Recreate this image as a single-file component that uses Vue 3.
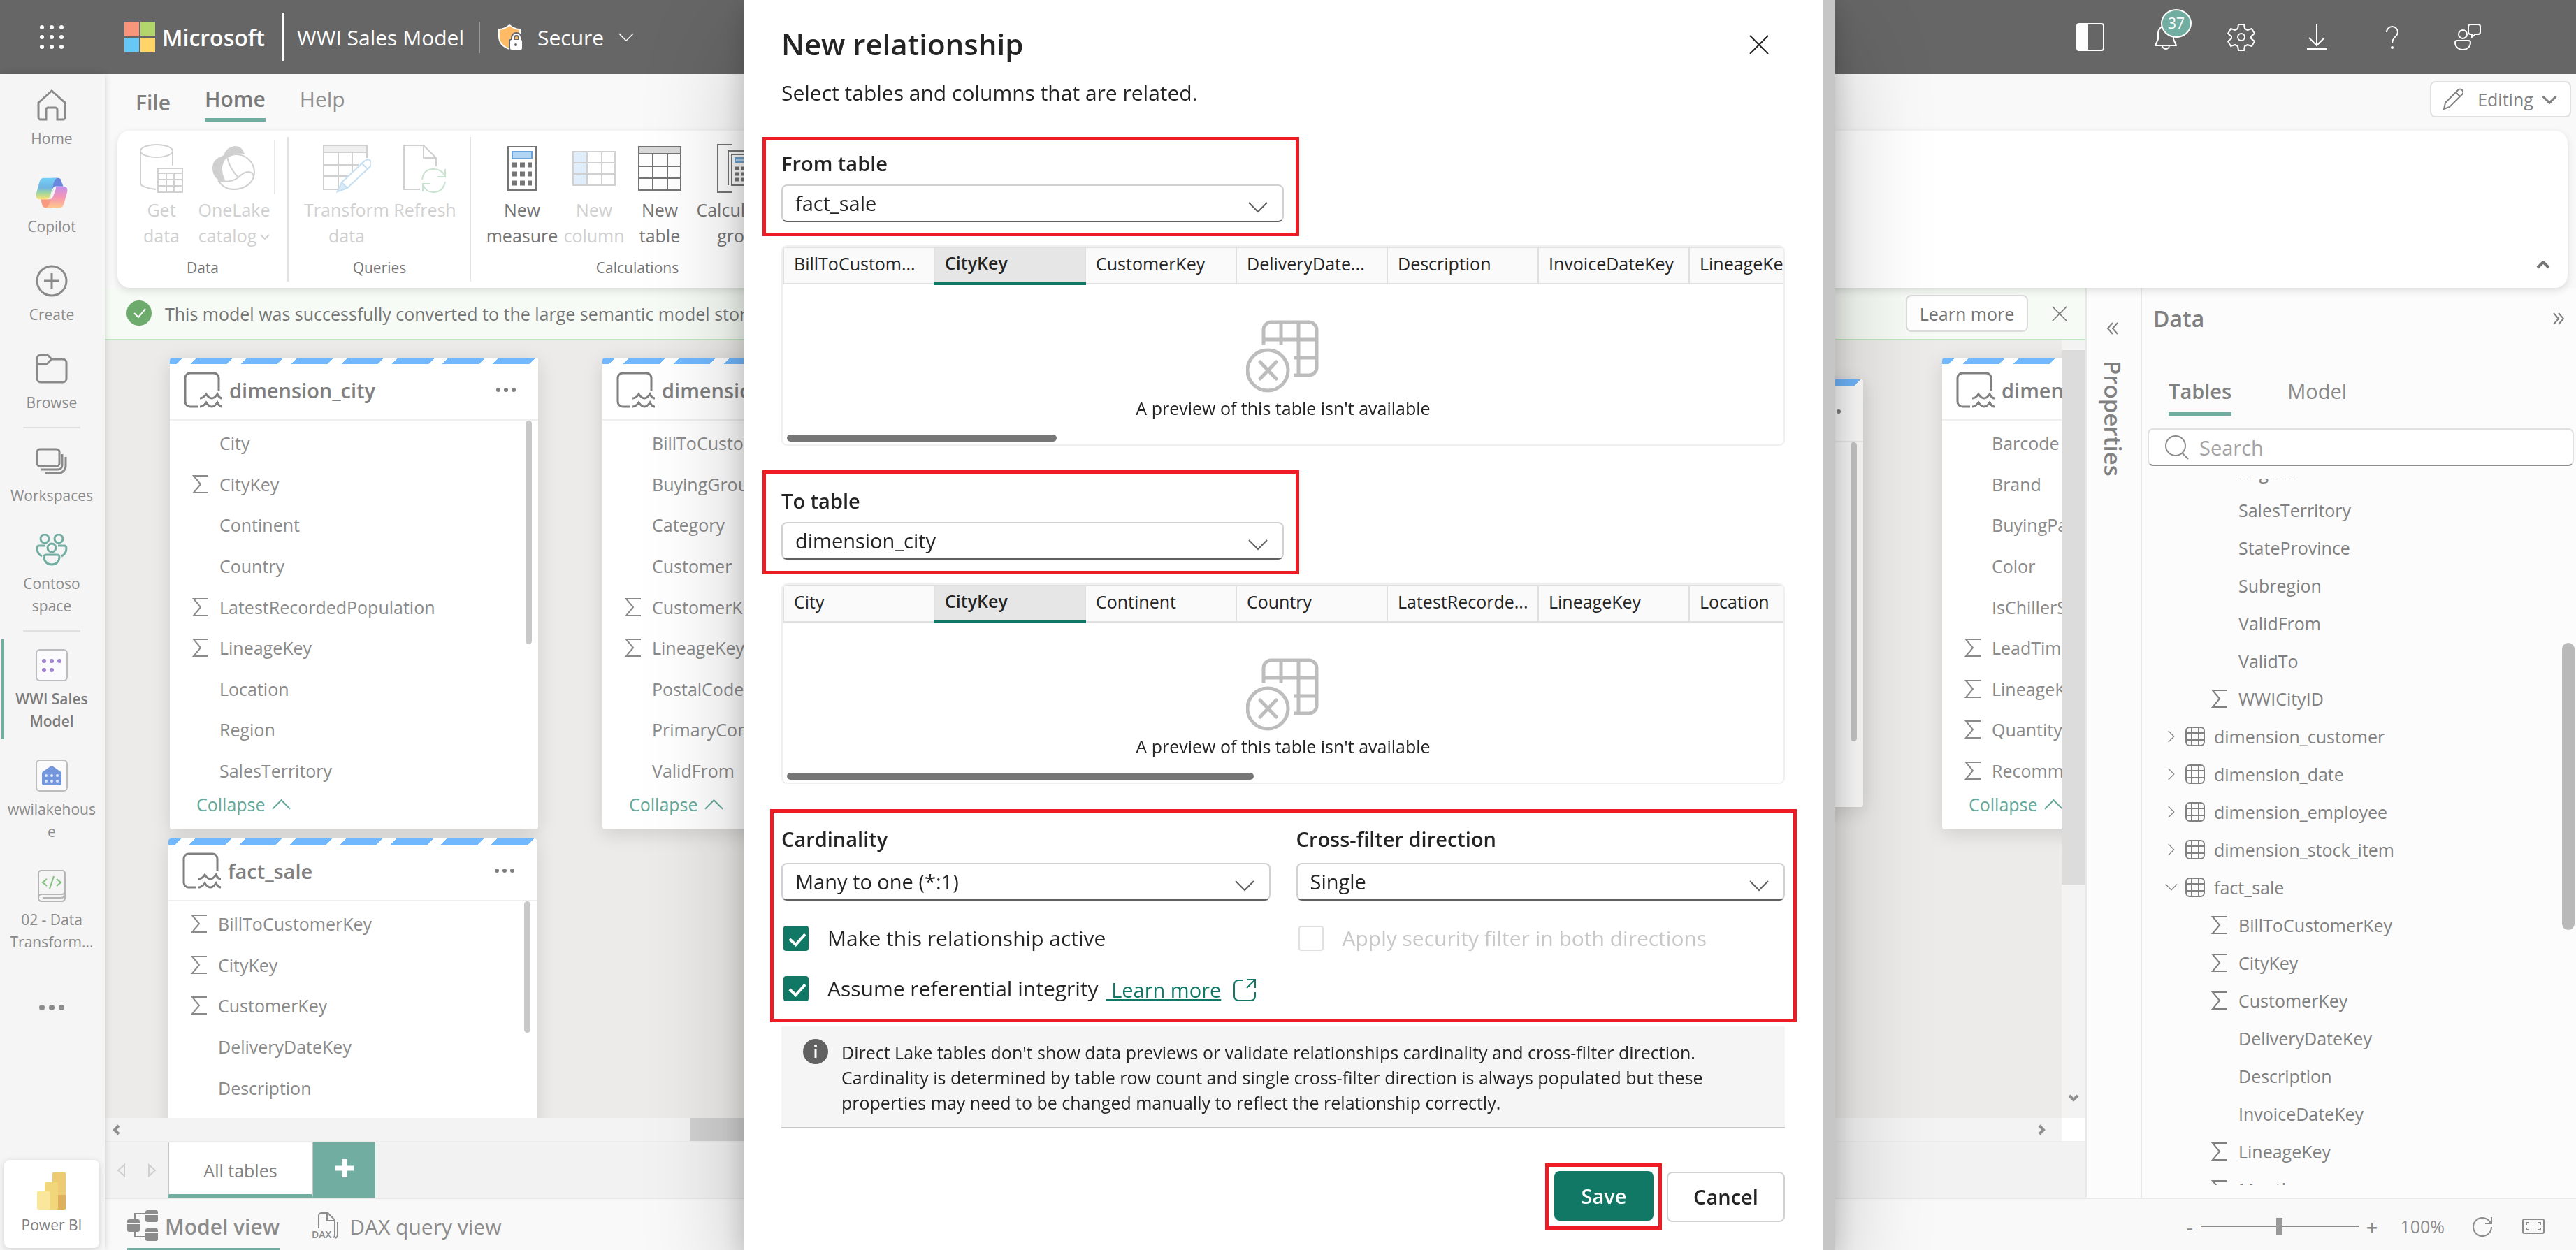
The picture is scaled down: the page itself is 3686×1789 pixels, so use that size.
<template>
    <svg class="sprite" aria-hidden="true">
        <symbol id="sigma" viewBox="0 0 24 28">
            <path d="M23 2H2l10 12L2 26h21" fill="none" stroke="currentColor" stroke-width="2" />
        </symbol>
        <symbol id="chevron" viewBox="0 0 28 16">
            <path d="M1 1l13 13L27 1" fill="none" stroke="currentColor" stroke-width="2" />
        </symbol>
        <symbol id="chevron-bold" viewBox="0 0 28 16">
            <path d="M2 2l12 12L26 2" fill="none" stroke="currentColor" stroke-width="4" />
        </symbol>
        <symbol id="close" viewBox="0 0 28 28">
            <path d="M1 1l26 26M27 1L1 27" fill="none" stroke="currentColor" stroke-width="2" />
        </symbol>
        <symbol id="grid" viewBox="0 0 28 28">
            <path d="M6 1h16a5 5 0 0 1 5 5v16a5 5 0 0 1-5 5H6a5 5 0 0 1-5-5V6a5 5 0 0 1 5-5zM9 1v26M19 1v26M1 9h26M1 19h26" fill="none" stroke="currentColor" stroke-width="2" />
        </symbol>
        <symbol id="lake" viewBox="0 0 56 52">
            <g fill="none" stroke="currentColor" stroke-width="3">
                <path d="M50 27V9a7 7 0 0 0-7-7H9a7 7 0 0 0-7 7v34a7 7 0 0 0 7 7h11" />
                <path d="M23 38q5 0 9-6q4 6 8 6t8-6q3 6 7 6M23 50q5 0 9-6q4 6 8 6t8-6q3 6 7 6" />
            </g>
        </symbol>
        <symbol id="no-preview" viewBox="0 0 106 104">
            <g fill="none" stroke="currentColor" stroke-width="5">
                <path d="M25 36V14A11 11 0 0 1 36 3h54a11 11 0 0 1 11 11v54a11 11 0 0 1-11 11H68M50 3v33M75 3v76M25 28h76M68 54h33" />
                <circle cx="31" cy="72" r="29" />
                <path d="M20 60l23 24M43 60L20 84" stroke-linecap="round" />
            </g>
        </symbol>
    </svg>

    <div class="app">
        <header class="topbar">
            <button class="icon-btn waffle" aria-label="App launcher">
                <svg width="36" height="36" viewBox="0 0 36 36" fill="#fff">
                    <circle v-for="n in 9" :key="n" :cx="4 + ((n - 1) % 3) * 14" :cy="4 + Math.floor((n - 1) / 3) * 14" r="3" />
                </svg>
            </button>
            <svg class="ms-logo" width="44" height="44" viewBox="0 0 44 44">
                <path fill="#f8957a" d="M0 0h21v21H0z" />
                <path fill="#b2d66b" d="M23 0h21v21H23z" />
                <path fill="#67c8f5" d="M0 23h21v21H0z" />
                <path fill="#ffd568" d="M23 23h21v21H23z" />
            </svg>
            <span class="brand">Microsoft</span>
            <span class="bar-line tall"></span>
            <span class="model-name">WWI Sales Model</span>
            <span class="bar-line short"></span>
            <button class="secure">
                <svg width="36" height="38" viewBox="0 0 36 38">
                    <path d="M17 2c5 4 9 6 15 6v10c0 9-6 15-15 18C8 33 2 27 2 18V8c6 0 10-2 15-6z" fill="#ffba66" stroke="#fff" stroke-width="2" />
                    <path d="M22 24v-4a5 5 0 0 1 10 0v4" fill="none" stroke="#666" stroke-width="6" />
                    <path d="M16 22h20v16H16z" fill="#666" />
                    <path d="M22 24v-4a5 5 0 0 1 10 0v4" fill="none" stroke="#fff" stroke-width="2" />
                    <rect x="18" y="23" width="17" height="14" rx="2" fill="#fff" />
                    <circle cx="26" cy="30" r="2" fill="#666" />
                </svg>
                Secure
                <svg class="secure-arrow"><use href="#chevron" /></svg>
            </button>
            <div class="top-actions">
                <button class="icon-btn" aria-label="Toggle pane">
                    <svg width="40" height="40" viewBox="0 0 40 40">
                        <rect x="1" y="1" width="38" height="38" rx="3" fill="none" stroke="#fff" stroke-width="2" />
                        <path d="M2 2h15v36H2z" fill="#fff" />
                    </svg>
                </button>
                <button class="icon-btn" aria-label="Notifications">
                    <svg width="34" height="38" viewBox="0 0 34 38" fill="none" stroke="#fff" stroke-width="2">
                        <path d="M17 3c-7 0-11 5-11 11v8l-4 9h30l-4-9v-8c0-6-4-11-11-11zM12 31a5 5 0 0 0 10 0" stroke-linejoin="round" />
                    </svg>
                    <span class="badge">37</span>
                </button>
                <button class="icon-btn" aria-label="Settings">
                    <svg width="40" height="40" viewBox="0 0 40 40" fill="none" stroke="#fff" stroke-width="2" stroke-linejoin="round">
                        <path d="M16 2h8l1 6 4 2 6-2 4 7-5 4v3l5 4-4 7-6-2-4 2-1 6h-8l-1-6-4-2-6 2-4-7 5-4v-3l-5-4 4-7 6 2 4-2z" />
                        <circle cx="20" cy="20" r="5" />
                    </svg>
                </button>
                <button class="icon-btn" aria-label="Download">
                    <svg width="30" height="38" viewBox="0 0 30 38" fill="none" stroke="#fff" stroke-width="2">
                        <path d="M15 1v29M4 20l11 11 11-11M1 36h28" />
                    </svg>
                </button>
                <button class="icon-btn" aria-label="Help">
                    <svg width="20" height="34" viewBox="0 0 20 34" fill="none" stroke="#fff" stroke-width="2">
                        <path d="M2 10a8 8 0 0 1 16 0c0 7-8 6-8 16" />
                        <circle cx="10" cy="32" r="1" fill="#fff" />
                    </svg>
                </button>
                <button class="icon-btn" aria-label="Feedback">
                    <svg width="38" height="38" viewBox="0 0 38 38" fill="none" stroke="#fff" stroke-width="2">
                        <circle cx="12" cy="15" r="6" />
                        <path d="M4 24h16a3 3 0 0 1 3 3c0 6-5 10-11 10S1 33 1 27a3 3 0 0 1 3-3zM23 1h11a3 3 0 0 1 3 3v8a3 3 0 0 1-3 3h-4l-5 4v-4h-2a3 3 0 0 1-3-3V4a3 3 0 0 1 3-3z" />
                    </svg>
                </button>
            </div>
        </header>

        <div class="body">
            <nav class="rail">
                <a href="#" class="rail-item">
                    <svg viewBox="0 0 46 46" class="line">
                        <path d="M4 20L23 3l19 17v21a3 3 0 0 1-3 3h-8V30a3 3 0 0 0-3-3H18a3 3 0 0 0-3 3v14H7a3 3 0 0 1-3-3z" />
                    </svg>
                    <span>Home</span>
                </a>
                <a href="#" class="rail-item">
                    <svg viewBox="0 0 50 46">
                        <defs>
                            <linearGradient id="cpA" x1="0" y1="0" x2="0" y2="1">
                                <stop offset="0" stop-color="#74d0f7" />
                                <stop offset=".45" stop-color="#6fb4e2" />
                                <stop offset=".7" stop-color="#9fd6a0" />
                                <stop offset="1" stop-color="#ffe06e" />
                            </linearGradient>
                            <linearGradient id="cpB" x1="0" y1="0" x2="0" y2="1">
                                <stop offset="0" stop-color="#c490ef" />
                                <stop offset=".5" stop-color="#f495b4" />
                                <stop offset="1" stop-color="#ffc78a" />
                            </linearGradient>
                        </defs>
                        <path d="M26 0h9q4 0 5 5l3 8H32q-5 0-6 5z" fill="#6a86dc" />
                        <path d="M24 46h-9q-4 0-5-5l-2-8h10q5 0 6-5z" fill="#f79a80" />
                        <path d="M12 0h22q-4 1-6 8l-5 19q-2 6-7 6H7q-8 0-6-9L6 6q2-6 6-6z" fill="url(#cpA)" />
                        <path d="M38 46H16q4-1 6-8l5-19q2-6 7-6h9q8 0 6 9l-5 18q-2 6-6 6z" fill="url(#cpB)" />
                        <path d="M24 28l4-11q1-4 6-4h-5q4 0 2 5l-4 11q-2 4-6 4h-5q6 0 8-5z" fill="#f5f5f5" />
                    </svg>
                    <span>Copilot</span>
                </a>
                <a href="#" class="rail-item">
                    <svg viewBox="0 0 46 46" class="line">
                        <circle cx="23" cy="23" r="21" />
                        <path d="M23 12v22M12 23h22" />
                    </svg>
                    <span>Create</span>
                </a>
                <a href="#" class="rail-item">
                    <svg viewBox="0 0 46 46" class="line">
                        <path d="M2 16V8a5 5 0 0 1 5-5h8q3 0 5 3l3 3h16a5 5 0 0 1 5 5v23a5 5 0 0 1-5 5H7a5 5 0 0 1-5-5zh12q3 0 5-3l4-4" />
                    </svg>
                    <span>Browse</span>
                </a>
                <hr />
                <a href="#" class="rail-item">
                    <svg viewBox="0 0 46 46" class="line">
                        <rect x="2" y="5" width="32" height="24" rx="4" />
                        <path d="M38 12v16a6 6 0 0 1-6 6H8M43 16v13a10 10 0 0 1-10 10H14" />
                    </svg>
                    <span>Workspaces</span>
                </a>
                <a href="#" class="rail-item">
                    <svg viewBox="0 0 46 46" class="line teal">
                        <circle cx="13" cy="7" r="6" />
                        <circle cx="33" cy="7" r="6" />
                        <circle cx="23" cy="20" r="6" />
                        <path d="M14 17H5a3 3 0 0 0-3 3q0 9 7 12M32 17h9a3 3 0 0 1 3 3q0 9-7 12M15 30h16a3 3 0 0 1 3 3c0 7-5 11-11 11s-11-4-11-11a3 3 0 0 1 3-3z" />
                    </svg>
                    <span>Contoso space</span>
                </a>
                <hr />
                <a href="#" class="rail-item current">
                    <svg viewBox="0 0 46 46">
                        <rect x="1" y="1" width="44" height="44" rx="5" fill="#fbfafd" stroke="#bdbdbd" stroke-width="2" />
                        <g fill="#a184d0">
                            <circle cx="12" cy="17" r="3" /><circle cx="23" cy="17" r="3" /><circle cx="34" cy="17" r="3" />
                            <circle cx="12" cy="30" r="3" /><circle cx="23" cy="30" r="3" />
                        </g>
                    </svg>
                    <span>WWI Sales Model</span>
                </a>
                <a href="#" class="rail-item">
                    <svg viewBox="0 0 46 46">
                        <rect x="1" y="1" width="44" height="44" rx="5" fill="#fafafa" stroke="#bdbdbd" stroke-width="2" />
                        <path d="M9 20q0-2 2-3l10-7q2-1 4 0l10 7q2 1 2 3v14a3 3 0 0 1-3 3H12a3 3 0 0 1-3-3z" fill="#7396dc" />
                        <g fill="#dce7fb">
                            <circle cx="15" cy="23" r="2" /><circle cx="23" cy="23" r="2" /><circle cx="31" cy="23" r="2" />
                            <circle cx="15" cy="31" r="2" /><circle cx="23" cy="31" r="2" /><circle cx="31" cy="31" r="2" />
                        </g>
                    </svg>
                    <span>wwilakehouse</span>
                </a>
                <a href="#" class="rail-item">
                    <svg viewBox="0 0 46 46" fill="none" stroke="#b5b5b5" stroke-width="2">
                        <path d="M4 40V5a4 4 0 0 1 4-4h30a4 4 0 0 1 4 4v25q0 5-5 5H9q-5 0-5 5t5 5h28q5 0 5-5v-9M10 40h26q5 0 5-5" />
                        <path d="M16 13l-6 5 6 5M30 13l6 5-6 5M26 9l-6 18" stroke="#7fbf7c" />
                    </svg>
                    <span>02 - Data Transform...</span>
                </a>
                <button class="rail-more" aria-label="More">
                    <svg width="36" height="8" viewBox="0 0 36 8" fill="#8c8c8c">
                        <circle cx="4" cy="4" r="4" /><circle cx="18" cy="4" r="4" /><circle cx="32" cy="4" r="4" />
                    </svg>
                </button>
                <a href="#" class="rail-app">
                    <svg width="42" height="54" viewBox="0 0 42 54">
                        <rect x="22" width="19" height="54" rx="2" fill="#deb05c" />
                        <path d="M24 0h15a2 2 0 0 1 2 2v30H22V2a2 2 0 0 1 2-2z" fill="#eccb72" />
                        <rect x="11" y="14" width="19" height="40" rx="2" fill="#f2d67b" />
                        <rect y="27" width="19" height="27" rx="2" fill="#fae79c" />
                    </svg>
                    <span>Power BI</span>
                </a>
            </nav>

            <main class="main">
                <section class="ribbon">
                    <div class="ribbon-tabs">
                        <button class="file">File</button>
                        <button class="ribbon-tab active">Home</button>
                        <button class="ribbon-tab">Help</button>
                        <button class="editing">
                            <svg width="30" height="32" viewBox="0 0 30 32" fill="none" stroke="currentColor" stroke-width="2">
                                <path d="M2 30l2-9L22 3q3-3 6 0t0 6L10 27zM19 6l6 6" />
                            </svg>
                            Editing
                            <svg class="editing-arrow"><use href="#chevron-bold" /></svg>
                        </button>
                    </div>
                    <div class="ribbon-card">
                        <div class="group">
                            <div class="group-row">
                                <button class="tool get" disabled>
                                    <svg width="64" height="70" viewBox="0 0 64 70" class="tool-icon">
                                        <ellipse cx="25" cy="10" rx="23" ry="9" />
                                        <path d="M2 10v46q0 6 22 9M48 10v21" />
                                        <path d="M27 35h35v34H27zM27 42h35M27 51h35M27 60h35M39 42v27M50 42v27" />
                                    </svg>
                                    <span>Get<br />data</span>
                                </button>
                                <button class="tool onelake" disabled>
                                    <svg width="64" height="66" viewBox="0 0 64 66" class="tool-icon">
                                        <path d="M16 15Q23 1 33 1q11 0 14 12-13-4-25 4-13 14-2 35l-10-2Q1 44 1 33q0-14 15-18z" fill="currentColor" stroke="none" />
                                        <path d="M22 17q6-4 13-4a26 26 0 0 1 26 25c0 15-13 25-30 25q-14 0-22-13M22 17q4 17 16 29M9 50q17 5 29-4 8-8 14-8 7 0 8 7" />
                                    </svg>
                                    <span>OneLake<br />catalog<svg class="tiny-arrow"><use href="#chevron-bold" /></svg></span>
                                </button>
                            </div>
                            <p>Data</p>
                        </div>
                        <div class="group">
                            <div class="group-row">
                                <button class="tool transform" disabled>
                                    <svg width="70" height="70" viewBox="0 0 70 70" class="tool-icon">
                                        <path d="M2 2h62v10H2z" fill="#efefef" />
                                        <path d="M22 65H2V2h62v18M2 12h62M2 30h50M2 46h36M23 12v53M43 12v30" />
                                        <path d="M22 68l6-13 33-31q5-3 8 0t0 8L36 63zM57 28l8 8" stroke="#c5dff2" fill="#fff" />
                                        <path d="M22 68l6-13 8 8z" stroke="#c5dff2" fill="#dcebf8" />
                                    </svg>
                                    <span>Transform<br />data</span>
                                </button>
                                <button class="tool refresh" disabled>
                                    <svg width="64" height="70" viewBox="0 0 64 70" class="tool-icon">
                                        <path d="M25 65H2V2h28l18 18v12M30 2v18h18" />
                                        <path d="M28 51q2-15 16-15 12 0 17 10M61 36v11H50M61 54q-3 15-17 15-11 0-15-11M29 68V57h11" stroke="#c8e3cf" />
                                    </svg>
                                    <span>Refresh</span>
                                </button>
                            </div>
                            <p>Queries</p>
                        </div>
                        <div class="group">
                            <div class="group-row">
                                <button class="tool measure">
                                    <svg width="44" height="66" viewBox="0 0 44 66" class="tool-icon">
                                        <path d="M2 2h40v62H2z" />
                                        <path d="M8 9h28v10H8z" fill="#b1d5f2" stroke="#6ba3d6" />
                                        <path d="M8 28h28M8 41h28M8 54h28" stroke-width="7" stroke-dasharray="7 4" />
                                    </svg>
                                    <span>New<br />measure</span>
                                </button>
                                <button class="tool column" disabled>
                                    <svg width="64" height="52" viewBox="0 0 64 52" class="tool-icon">
                                        <path d="M2 2h20v48H2z" fill="#dfeefa" />
                                        <path d="M2 2h60v48H2zM2 18h60M2 34h60M22 2v48M43 2v48" />
                                    </svg>
                                    <span>New<br />column</span>
                                </button>
                                <button class="tool table">
                                    <svg width="64" height="66" viewBox="0 0 64 66" class="tool-icon">
                                        <path d="M2 2h60v10H2z" fill="#d9d9d9" />
                                        <path d="M2 2h60v62H2zM2 12h60M2 30h60M2 47h60M22 12v52M43 12v52" />
                                    </svg>
                                    <span>New<br />table</span>
                                </button>
                                <button class="tool calc">
                                    <svg width="72" height="72" viewBox="0 0 72 72" class="tool-icon">
                                        <path d="M23 2H2v68h21M49 2h21v68H49" />
                                        <path d="M17 60V11h34M22 16h30v44H22z" />
                                        <path d="M27 21h20v6H27z" fill="#b1d5f2" stroke="#6ba3d6" />
                                        <path d="M27 36h20M27 44h20M27 52h20" stroke-width="5" stroke-dasharray="5 3" />
                                    </svg>
                                    <span>Calculation<br />group</span>
                                </button>
                            </div>
                            <p>Calculations</p>
                        </div>
                        <button class="ribbon-collapse" aria-label="Collapse ribbon">
                            <svg width="20" height="12" viewBox="0 0 20 12"><path d="M2 10l8-8 8 8" fill="none" stroke="#757575" stroke-width="4" /></svg>
                        </button>
                    </div>
                </section>

                <div class="work">
                    <section class="designer">
                        <div class="message">
                            <svg width="37" height="37" viewBox="0 0 37 37">
                                <circle cx="18" cy="18" r="18" fill="#6dab6d" />
                                <path d="M11 18l6 6 10-12" fill="none" stroke="#fff" stroke-width="2" />
                            </svg>
                            <span>This model was successfully converted to the large semantic model storage format.</span>
                            <button class="learn-btn">Learn more</button>
                            <button class="icon-btn message-close" aria-label="Dismiss">
                                <svg width="22" height="22"><use href="#close" /></svg>
                            </button>
                        </div>

                        <div class="canvas-row">
                            <div class="canvas">
                                <article
                                    v-for="card in cards"
                                    :key="card.name"
                                    class="card"
                                    :style="{ left: card.x + 'px', top: card.y + 'px', height: card.height + 'px' }"
                                >
                                    <div class="stripe"></div>
                                    <header>
                                        <svg class="lake"><use href="#lake" /></svg>
                                        <h3>{{ card.name }}</h3>
                                        <svg class="dots" viewBox="0 0 30 8">
                                            <circle cx="4" cy="4" r="3" /><circle cx="15" cy="4" r="3" /><circle cx="26" cy="4" r="3" />
                                        </svg>
                                    </header>
                                    <ul>
                                        <li v-for="column in card.columns" :key="column.name">
                                            <svg v-if="column.sum" class="sigma"><use href="#sigma" /></svg>
                                            <span>{{ column.name }}</span>
                                        </li>
                                    </ul>
                                    <button class="collapse">
                                        Collapse
                                        <svg><use href="#chevron" /></svg>
                                    </button>
                                    <i class="card-scroll" :style="{ height: card.thumb + 'px' }"></i>
                                </article>
                            </div>
                            <div class="v-scroll">
                                <i></i>
                                <svg width="16" height="12" viewBox="0 0 16 12"><path d="M2 2l6 6 6-6" fill="none" stroke="#8f8f8f" stroke-width="4" /></svg>
                            </div>
                        </div>
                        <div class="h-scroll">
                            <svg width="12" height="16" viewBox="0 0 12 16"><path d="M10 2L4 8l6 6" fill="none" stroke="#8f8f8f" stroke-width="4" /></svg>
                            <i></i>
                            <svg width="12" height="16" viewBox="0 0 12 16"><path d="M2 2l6 6-6 6" fill="none" stroke="#8f8f8f" stroke-width="4" /></svg>
                            <b></b>
                        </div>

                        <div class="layout-tabs">
                            <button class="step" aria-label="Previous">
                                <svg width="12" height="20" viewBox="0 0 12 20"><path d="M11 2L2 10l9 8z" fill="none" stroke="#cfcfcf" stroke-width="2" /></svg>
                            </button>
                            <button class="step" aria-label="Next">
                                <svg width="12" height="20" viewBox="0 0 12 20"><path d="M1 2l9 8-9 8z" fill="none" stroke="#cfcfcf" stroke-width="2" /></svg>
                            </button>
                            <button class="layout-tab">All tables</button>
                            <button class="add-tab" aria-label="New layout">
                                <svg width="26" height="26" viewBox="0 0 26 26"><path d="M13 0v26M0 13h26" stroke="#fff" stroke-width="7" /></svg>
                            </button>
                        </div>
                    </section>

                    <aside class="properties">
                        <svg width="18" height="18" viewBox="0 0 18 18"><path d="M9 1L2 9l7 8M16 1L9 9l7 8" fill="none" stroke="#808080" stroke-width="2" /></svg>
                        <h2>Properties</h2>
                    </aside>

                    <aside class="data">
                        <div class="data-head">
                            <h2>Data</h2>
                            <svg width="18" height="18" viewBox="0 0 18 18"><path d="M2 1l7 8-7 8M9 1l7 8-7 8" fill="none" stroke="#808080" stroke-width="2" /></svg>
                        </div>
                        <div class="data-tabs">
                            <button class="active">Tables</button>
                            <button>Model</button>
                        </div>
                        <label class="search">
                            <svg width="36" height="36" viewBox="0 0 36 36" fill="none" stroke="#8a8a8a" stroke-width="2">
                                <circle cx="16" cy="16" r="14" />
                                <path d="M25 26l9 9" />
                            </svg>
                            <input type="text" placeholder="Search" aria-label="Search" />
                        </label>
                        <div class="tree-view">
                            <ul class="tree">
                                <li v-for="(row, i) in tree" :key="i" :class="{ child: !row.table }">
                                    <template v-if="row.table">
                                        <svg class="arrow" :class="{ open: row.open }"><use href="#chevron" /></svg>
                                        <svg class="grid"><use href="#grid" /></svg>
                                    </template>
                                    <svg v-else-if="row.sum" class="sigma"><use href="#sigma" /></svg>
                                    <span>{{ row.name }}</span>
                                </li>
                            </ul>
                        </div>
                        <i class="data-scroll"></i>
                    </aside>
                </div>

                <footer class="statusbar">
                    <button class="view active">
                        <svg width="44" height="46" viewBox="0 0 44 46">
                            <path d="M25 6H11v12M11 28v11h14" fill="none" stroke="#8c8c8c" stroke-width="2" />
                            <g fill="#8c8c8c">
                                <rect x="26" y="1" width="18" height="17" rx="3" />
                                <rect x="26" y="27" width="18" height="18" rx="3" />
                                <rect y="14" width="18" height="18" rx="3" />
                            </g>
                            <path d="M26 7h18M26 33h18M0 20h18" stroke="#f9f9f9" stroke-width="2" />
                        </svg>
                        <span>Model view</span>
                    </button>
                    <button class="view">
                        <svg width="40" height="40" viewBox="0 0 40 40" fill="none" stroke="#8c8c8c" stroke-width="2">
                            <path d="M10 24V6a4 4 0 0 1 4-4h9l10 10v22q0 3-3 3M22 2v11h11M37 15v18q0 4-4 5" />
                            <text x="0" y="38" font-size="14" font-weight="600" fill="#8c8c8c" stroke="none">DAX</text>
                        </svg>
                        <span>DAX query view</span>
                    </button>
                    <div class="zoom">
                        <button class="step-btn" aria-label="Zoom out">-</button>
                        <input v-model="zoom" type="range" min="0" max="200" aria-label="Zoom" />
                        <button class="step-btn" aria-label="Zoom in">+</button>
                        <span>{{ zoom }}%</span>
                        <svg width="30" height="30" viewBox="0 0 30 30" fill="none" stroke="#8c8c8c" stroke-width="2">
                            <path d="M27 11A13 13 0 1 0 28 16M28 2v9h-9" />
                        </svg>
                        <svg width="32" height="22" viewBox="0 0 32 22" fill="none" stroke="#8c8c8c" stroke-width="2">
                            <rect x="1" y="1" width="30" height="20" rx="2" />
                            <path d="M6 9V6h4M22 6h4v3M26 13v3h-4M10 16H6v-3" />
                        </svg>
                    </div>
                </footer>
            </main>
        </div>

        <div class="overlay">
            <form class="dialog" role="dialog" aria-labelledby="dialog-title" @submit.prevent>
                <div class="dialog-body">
                    <div class="dialog-head">
                        <h1 id="dialog-title">New relationship</h1>
                        <button type="button" class="icon-btn" aria-label="Close">
                            <svg width="28" height="28"><use href="#close" /></svg>
                        </button>
                    </div>
                    <p class="intro">Select tables and columns that are related.</p>

                    <template v-for="side in sides" :key="side.id">
                        <div class="marked" :class="side.id">
                            <label :for="side.id">{{ side.label }}</label>
                            <div class="select">
                                <select :id="side.id">
                                    <option>{{ side.value }}</option>
                                </select>
                                <svg><use href="#chevron" /></svg>
                            </div>
                        </div>
                        <div class="preview">
                            <table>
                                <thead>
                                    <tr>
                                        <th v-for="name in side.columns" :key="name" :class="{ picked: name === 'CityKey' }">{{ name }}</th>
                                    </tr>
                                </thead>
                            </table>
                            <div class="empty">
                                <svg><use href="#no-preview" /></svg>
                                <p>A preview of this table isn't available</p>
                            </div>
                            <i :style="{ width: side.thumb + 'px' }"></i>
                        </div>
                    </template>

                    <div class="marked options">
                        <div>
                            <label for="cardinality">Cardinality</label>
                            <div class="select">
                                <select id="cardinality">
                                    <option>Many to one (*:1)</option>
                                </select>
                                <svg><use href="#chevron" /></svg>
                            </div>
                            <label class="check">
                                <input v-model="active" type="checkbox" />
                                Make this relationship active
                            </label>
                            <div class="check-row">
                                <label class="check">
                                    <input v-model="integrity" type="checkbox" />
                                    Assume referential integrity
                                </label>
                                <a href="#">&nbsp;Learn more</a>
                                <svg width="32" height="32" viewBox="0 0 32 32" fill="none" stroke="#117865" stroke-width="2">
                                    <path d="M13 2H7a6 6 0 0 0-6 6v17a6 6 0 0 0 6 6h18a6 6 0 0 0 6-6v-6M19 1h12v12M31 1L19 13" />
                                </svg>
                            </div>
                        </div>
                        <div>
                            <label for="direction">Cross-filter direction</label>
                            <div class="select">
                                <select id="direction">
                                    <option>Single</option>
                                </select>
                                <svg><use href="#chevron" /></svg>
                            </div>
                            <label class="check disabled">
                                <input type="checkbox" disabled />
                                Apply security filter in both directions
                            </label>
                        </div>
                    </div>

                    <div class="info">
                        <svg width="37" height="37" viewBox="0 0 37 37">
                            <circle cx="18" cy="18" r="18" fill="#616161" />
                            <path d="M18 15v12" stroke="#fff" stroke-width="3" />
                            <circle cx="18" cy="10" r="2" fill="#fff" />
                        </svg>
                        <p>Direct Lake tables don't show data previews or validate relationships cardinality and cross-filter direction. Cardinality is determined by table row count and single cross-filter direction is always populated but these properties may need to be changed manually to reflect the relationship correctly.</p>
                    </div>

                    <div class="actions">
                        <div class="marked save-mark">
                            <button class="save">Save</button>
                        </div>
                        <button type="button" class="cancel">Cancel</button>
                    </div>
                </div>
                <div class="dialog-scroll"></div>
            </form>
        </div>
    </div>
</template>

<script setup>
import { ref } from 'vue'

const zoom = ref(100)
const active = ref(true)
const integrity = ref(true)

// a leading "+" marks a column that is summed
function parse(names) {
    return names.map((name) => ({ name: name.replace('+', ''), sum: name.startsWith('+') }))
}

const cards = [
    {
        name: 'dimension_city',
        x: 93,
        y: 25,
        height: 675,
        thumb: 320,
        columns: parse(['City', '+CityKey', 'Continent', 'Country', '+LatestRecordedPopulation', '+LineageKey', 'Location', 'Region', 'SalesTerritory']),
    },
    {
        name: 'dimension_customer',
        x: 712,
        y: 25,
        height: 675,
        thumb: 320,
        columns: parse(['BillToCustomer', 'BuyingGroup', 'Category', 'Customer', '+CustomerKey', '+LineageKey', 'PostalCode', 'PrimaryContact', 'ValidFrom']),
    },
    {
        name: 'dimension_employee',
        x: 1989,
        y: 56,
        height: 612,
        thumb: 428,
        columns: [],
    },
    {
        name: 'dimension_stock_item',
        x: 2629,
        y: 25,
        height: 675,
        thumb: 320,
        columns: parse(['Barcode', 'Brand', 'BuyingPackage', 'Color', 'IsChillerStock', '+LeadTimeDays', '+LineageKey', '+QuantityPerOuter', '+RecommendedRetailPrice']),
    },
    {
        name: 'fact_sale',
        x: 91,
        y: 713,
        height: 675,
        thumb: 188,
        columns: parse(['+BillToCustomerKey', '+CityKey', '+CustomerKey', 'DeliveryDateKey', 'Description', 'InvoiceDateKey', '+LineageKey', '+Month', '+Package']),
    },
]

const tree = [
    ...parse(['Region', 'SalesTerritory', 'StateProvince', 'Subregion', 'ValidFrom', 'ValidTo', '+WWICityID']),
    { name: 'dimension_customer', table: true },
    { name: 'dimension_date', table: true },
    { name: 'dimension_employee', table: true },
    { name: 'dimension_stock_item', table: true },
    { name: 'fact_sale', table: true, open: true },
    ...parse(['+BillToCustomerKey', '+CityKey', '+CustomerKey', 'DeliveryDateKey', 'Description', 'InvoiceDateKey', '+LineageKey', '+Month']),
]

const sides = [
    {
        id: 'from',
        label: 'From table',
        value: 'fact_sale',
        thumb: 386,
        columns: ['BillToCustom...', 'CityKey', 'CustomerKey', 'DeliveryDate...', 'Description', 'InvoiceDateKey', 'LineageKey'],
    },
    {
        id: 'to',
        label: 'To table',
        value: 'dimension_city',
        thumb: 668,
        columns: ['City', 'CityKey', 'Continent', 'Country', 'LatestRecorde...', 'LineageKey', 'Location'],
    },
]
</script>

<style>
body {
    overflow: hidden;
}
</style>

<style scoped>
.app {
    height: 100vh;
    display: flex;
    flex-direction: column;
    font-family: "Open Sans", "Noto Sans", sans-serif;
    font-size: 25px;
    color: #808080;
    background: #f9f9f9;
    overflow: hidden;
}

.app * {
    box-sizing: border-box;
}

.sprite {
    position: absolute;
    width: 0;
    height: 0;
}

button,
input,
select {
    font: inherit;
    color: inherit;
    background: none;
    border: none;
    padding: 0;
    margin: 0;
}

svg {
    flex: none;
}

a {
    color: inherit;
    text-decoration: none;
}

h1,
h2,
h3,
p,
ul {
    margin: 0;
    padding: 0;
    list-style: none;
    font-weight: 400;
}

.icon-btn {
    display: flex;
    align-items: center;
    justify-content: center;
}

/* top bar */
.topbar {
    flex: none;
    height: 106px;
    display: flex;
    align-items: center;
    background: #666;
    color: #fff;
    font-size: 30px;
}

.waffle {
    width: 148px;
}

.ms-logo {
    margin-left: 30px;
}

.brand {
    margin-left: 10px;
    font-size: 32px;
    font-weight: 600;
}

.bar-line {
    width: 2px;
    background: #fff;
}

.bar-line.tall {
    height: 68px;
    margin: 0 19px 0 25px;
}

.bar-line.short {
    height: 45px;
    margin: 0 25px 0 21px;
    background: #999;
}

.secure {
    display: flex;
    align-items: center;
    gap: 21px;
}

.secure-arrow {
    width: 22px;
    height: 13px;
}

.top-actions {
    margin-left: auto;
    margin-right: 101px;
    display: flex;
}

.top-actions .icon-btn {
    position: relative;
    width: 108px;
    height: 106px;
}

.badge {
    position: absolute;
    top: 13px;
    left: 47px;
    width: 44px;
    height: 41px;
    border: 2px solid #fff;
    border-radius: 50%;
    background: #71ada1;
    font-size: 21px;
    line-height: 36px;
    text-align: center;
}

.body {
    flex: 1;
    min-height: 0;
    display: flex;
}

/* left rail */
.rail {
    position: relative;
    z-index: 2;
    flex: none;
    width: 150px;
    padding: 21px 2px 0 0;
    display: flex;
    flex-direction: column;
    align-items: center;
    background: #f5f5f5;
    box-shadow: 0 0 10px rgba(0, 0, 0, 0.16);
    font-size: 21px;
    line-height: 32px;
}

.rail-item {
    position: relative;
    width: 100%;
    padding: 0 8px;
    margin-bottom: 39px;
    display: flex;
    flex-direction: column;
    align-items: center;
    gap: 9px;
    text-align: center;
    overflow-wrap: anywhere;
    color: #8a8a8a;
}

.rail-item svg {
    width: 46px;
    height: 46px;
}

.rail-item .line {
    fill: none;
    stroke: #8a8a8a;
    stroke-width: 3;
}

.rail-item .teal {
    stroke: #71ada1;
}

.rail-item.current {
    font-weight: 600;
    color: #7a7a7a;
}

.rail-item.current::before {
    content: "";
    position: absolute;
    left: 2px;
    top: -14px;
    bottom: -10px;
    width: 4px;
    background: #71ada1;
}

.rail hr {
    width: 82px;
    height: 2px;
    margin: -20px 0 25px;
    border: none;
    background: #e0e0e0;
}

.rail-more {
    height: 46px;
    margin-top: 12px;
}

.rail-app {
    width: 136px;
    height: 126px;
    margin: auto 0 3px;
    padding-top: 18px;
    display: flex;
    flex-direction: column;
    align-items: center;
    gap: 5px;
    border-radius: 8px;
    background: #fff;
    box-shadow: 0 2px 10px rgba(0, 0, 0, 0.14);
}

.main {
    flex: 1;
    min-width: 0;
    display: flex;
    flex-direction: column;
}

/* ribbon */
.ribbon {
    position: relative;
    z-index: 1;
    flex: none;
}

.ribbon-tabs {
    height: 81px;
    padding: 10px 7px 0 44px;
    display: flex;
    align-items: flex-start;
    font-size: 30px;
    line-height: 40px;
}

.file {
    margin-top: 11px;
    margin-right: 49px;
    font-weight: 600;
}

.ribbon-tab {
    margin-top: 6px;
    margin-right: 49px;
    padding-bottom: 7px;
    border-bottom: 5px solid transparent;
    color: #8f8f8f;
}

.ribbon-tab.active {
    font-weight: 600;
    color: #7a7a7a;
    border-color: #71ada1;
}

.editing {
    width: 202px;
    height: 52px;
    margin-left: auto;
    padding: 0 18px 0 16px;
    display: flex;
    align-items: center;
    justify-content: space-between;
    border: 2px solid #e0e0e0;
    border-radius: 8px;
    background: #fff;
    font-size: 25px;
}

.editing svg:first-child {
    margin-right: 8px;
}

.editing-arrow {
    width: 22px;
    height: 13px;
}

.ribbon-card {
    margin: 0 12px 0 18px;
    height: 225px;
    padding: 9px 0;
    display: flex;
    border-radius: 18px;
    background: #fff;
    box-shadow: 0 4px 12px rgba(0, 0, 0, 0.12);
}

.group {
    padding: 4px 17px 0 18px;
    border-right: 2px solid #e2e2e2;
    color: #757575;
}

.group p {
    margin-top: 9px;
    font-size: 21px;
    line-height: 32px;
    text-align: center;
}

.group-row {
    height: 158px;
    display: flex;
}

.tool {
    display: flex;
    flex-direction: column;
    align-items: center;
    line-height: 37px;
}

.tool:disabled {
    color: #d0d0d0;
}

.tool-icon {
    margin: auto 0;
    fill: none;
    stroke: currentColor;
    stroke-width: 2;
}

.tool span {
    height: 76px;
}

.get {
    width: 90px;
}

.onelake {
    width: 118px;
    background: linear-gradient(#e8e8e8, #e8e8e8) right top / 2px 78px no-repeat;
}

.transform {
    width: 130px;
}

.refresh {
    width: 94px;
}

.measure {
    width: 110px;
}

.column {
    width: 96px;
}

.table {
    width: 92px;
}

.calc {
    width: 142px;
}

.tiny-arrow {
    width: 14px;
    height: 8px;
    margin: 0 0 4px 5px;
}

.ribbon-collapse {
    margin: auto 25px 18px auto;
    line-height: 12px;
}

/* work area */
.work {
    flex: 1;
    min-height: 0;
    display: flex;
}

.designer {
    flex: 1;
    min-width: 0;
    display: flex;
    flex-direction: column;
}

.message {
    flex: none;
    height: 75px;
    padding: 0 26px 0 31px;
    display: flex;
    align-items: center;
    border-bottom: 2px solid #bfe5c2;
    background: #f6fbf5;
    color: #757575;
}

.message span {
    margin-left: 18px;
}

.learn-btn {
    width: 175px;
    height: 53px;
    margin-left: auto;
    border: 2px solid #dcdcdc;
    border-radius: 8px;
    background: #fff;
}

.message-close {
    margin-left: 34px;
}

.canvas-row {
    flex: 1;
    min-height: 0;
    display: flex;
}

.canvas {
    position: relative;
    flex: 1;
    overflow: hidden;
    background: #ecebe9;
}

.card {
    position: absolute;
    width: 527px;
    display: flex;
    flex-direction: column;
    border-radius: 4px;
    background: #fff;
    box-shadow: 0 6px 28px rgba(0, 0, 0, 0.13);
}

.stripe {
    flex: none;
    height: 9px;
    border-radius: 4px 4px 0 0;
    background: repeating-linear-gradient(135deg, #71b8ff 0 13px, #fff 13px 27px, #71b8ff 27px 51px);
}

.card header {
    flex: none;
    height: 81px;
    padding: 0 31px 5px 20px;
    display: flex;
    align-items: center;
    border-bottom: 2px solid #efefef;
}

.lake {
    width: 56px;
    height: 52px;
    margin-right: 9px;
}

.card h3 {
    font-size: 29px;
    font-weight: 600;
}

.dots {
    width: 30px;
    height: 8px;
    margin-left: auto;
    fill: currentColor;
}

.card ul {
    flex: none;
    height: 527px;
    margin-top: 3px;
    padding-left: 71px;
    display: flex;
    flex-direction: column;
}

.card li {
    position: relative;
    flex: 1;
    display: flex;
    align-items: center;
    color: #8a8a8a;
}

.sigma {
    width: 24px;
    height: 28px;
}

.card .sigma {
    position: absolute;
    left: -39px;
}

.collapse {
    margin: 2px auto 0 38px;
    display: flex;
    align-items: center;
    gap: 9px;
    color: #66a899;
}

.collapse svg {
    width: 27px;
    height: 16px;
    rotate: 180deg;
}

.card-scroll {
    position: absolute;
    top: 90px;
    right: 9px;
    width: 9px;
    border-radius: 5px;
    background: #c8c8c8;
}

.v-scroll {
    flex: none;
    width: 34px;
    padding: 14px 0 22px;
    display: flex;
    flex-direction: column;
    align-items: center;
    justify-content: space-between;
    background: #f3f3f3;
}

.v-scroll i {
    width: 100%;
    height: 71%;
    background: #dcdcdc;
}

.h-scroll {
    flex: none;
    height: 35px;
    padding-left: 10px;
    display: flex;
    align-items: center;
    background: #f3f3f3;
    border-bottom: 2px solid #ededed;
}

.h-scroll i {
    width: 45%;
    height: 100%;
    margin: 0 auto 0 815px;
    background: #d1d1d1;
}

.h-scroll b {
    width: 34px;
    height: 100%;
    margin-left: 22px;
    background: #fff;
}

.layout-tabs {
    flex: none;
    height: 79px;
    display: flex;
    background: #f2f2f2;
}

.step {
    width: 45px;
}

.layout-tab {
    width: 208px;
    padding-top: 6px;
    border-left: 2px solid #c4c4c4;
    border-right: 2px solid #c4c4c4;
    border-bottom: 5px solid #71ada1;
    background: #fff;
}

.add-tab {
    width: 89px;
    background: #71ada1;
}

.properties {
    flex: none;
    width: 79px;
    padding: 49px 3px 0 0;
    display: flex;
    flex-direction: column;
    align-items: center;
    gap: 37px;
    border-left: 2px solid #e8e8e8;
    background: #fcfcfc;
}

.properties h2 {
    writing-mode: vertical-rl;
    font-size: 33px;
    font-weight: 600;
}

.data {
    position: relative;
    flex: none;
    width: 623px;
    padding-bottom: 18px;
    display: flex;
    flex-direction: column;
    border-left: 2px solid #e8e8e8;
    background: #fcfcfc;
}

.data-head {
    height: 90px;
    padding: 0 16px 3px;
    display: flex;
    align-items: center;
    justify-content: space-between;
}

.data-head h2 {
    font-size: 32px;
    font-weight: 600;
}

.data-tabs {
    height: 93px;
    padding: 38px 0 0 38px;
    display: flex;
    gap: 80px;
    font-size: 29px;
    line-height: 40px;
}

.data-tabs button {
    padding-bottom: 10px;
    border-bottom: 5px solid transparent;
    color: #8a8a8a;
}

.data-tabs .active {
    font-weight: 600;
    color: #808080;
    border-color: #71ada1;
}

.search {
    height: 54px;
    margin: 18px 3px 18px 8px;
    padding-left: 22px;
    display: flex;
    align-items: center;
    gap: 14px;
    border: 2px solid #e0e0e0;
    border-bottom-color: #8f8f8f;
    border-radius: 8px;
    background: #fff;
    font-size: 29px;
}

.search input {
    flex: 1;
    outline: none;
}

.search input::placeholder {
    color: #a3a3a3;
}

.tree-view {
    flex: 1;
    min-height: 0;
    overflow: hidden;
}

.tree {
    margin-top: -36px;
}

.tree li {
    position: relative;
    height: 54px;
    padding-left: 33px;
    display: flex;
    align-items: center;
}

.tree .child {
    padding-left: 138px;
}

.tree .sigma {
    position: absolute;
    left: 99px;
}

.arrow {
    width: 18px;
    height: 10px;
    margin-right: 11px;
    rotate: -90deg;
}

.arrow.open {
    rotate: none;
}

.grid {
    width: 28px;
    height: 28px;
    margin-right: 13px;
}

.data-scroll {
    position: absolute;
    top: 508px;
    right: 2px;
    width: 18px;
    height: 411px;
    border-radius: 9px;
    background: #b9b9b9;
}

/* status bar */
.statusbar {
    flex: none;
    height: 75px;
    padding: 0 45px 0 32px;
    display: flex;
    border-top: 2px solid #e8e8e8;
    background: #f9f9f9;
    color: #8c8c8c;
    font-size: 30px;
}

.view {
    margin-right: 46px;
    padding-top: 6px;
    display: flex;
    align-items: center;
    gap: 10px;
    border-bottom: 3px solid transparent;
}

.view span {
    padding-top: 3px;
}

.view + .view {
    gap: 14px;
}

.view.active {
    font-weight: 600;
    border-color: #71ada1;
}

.zoom {
    margin-left: auto;
    margin-top: 5px;
    display: flex;
    align-items: center;
    font-size: 25px;
}

.zoom input {
    appearance: none;
    width: 226px;
    height: 25px;
    margin: 0 11px;
    background: linear-gradient(#8c8c8c, #8c8c8c) center / 100% 2px no-repeat;
}

.zoom input::-webkit-slider-thumb {
    appearance: none;
    width: 9px;
    height: 25px;
    background: #999;
}

.zoom span {
    margin: 0 39px 0 32px;
}

.zoom svg + svg {
    margin-left: 42px;
}

.step-btn {
    font-size: 29px;
    font-weight: 600;
}

/* dialog */
.overlay {
    position: fixed;
    inset: 0;
    z-index: 10;
    padding-left: 4px;
    display: flex;
    justify-content: center;
}

.dialog {
    width: 1562px;
    display: flex;
    background: #fff;
    color: #242424;
    box-shadow: 0 58px 132px rgba(0, 0, 0, 0.22), 0 10px 34px rgba(0, 0, 0, 0.18);
}

.dialog-body {
    flex: 1;
    min-width: 0;
    padding: 34px 54px 0;
}

.dialog-scroll {
    width: 18px;
    background: #c6c6c6;
}

.dialog-head {
    height: 60px;
    padding-right: 23px;
    display: flex;
    align-items: center;
    justify-content: space-between;
}

.dialog h1 {
    padding-bottom: 3px;
    font-size: 42px;
    font-weight: 600;
}

.intro {
    margin-top: 19px;
    font-size: 30px;
    line-height: 40px;
}

.marked {
    width: 768px;
    margin-left: -27px;
    padding: 18px 17px 16px 22px;
    border: 5px solid #ed1c24;
    font-size: 29px;
    line-height: 40px;
}

.marked.from {
    margin-top: 43px;
    height: 142px;
    padding-top: 13px;
}

.marked.to {
    margin-top: 35px;
    height: 149px;
    padding-top: 19px;
}

.marked label {
    display: block;
    font-weight: 600;
}

.select {
    position: relative;
    margin-top: 10px;
}

.select select {
    appearance: none;
    display: block;
    width: 100%;
    height: 54px;
    padding: 0 18px;
    border: 2px solid #d1d1d1;
    border-bottom-color: #616161;
    border-radius: 8px;
    background: #fff;
}

.select svg {
    position: absolute;
    right: 23px;
    top: 25px;
    width: 28px;
    height: 16px;
    color: #616161;
    pointer-events: none;
}

.preview {
    position: relative;
    height: 287px;
    margin-top: 13px;
    border: 2px solid #f0f0f0;
    border-radius: 8px;
    overflow: hidden;
}

.preview table {
    width: 1514px;
    table-layout: fixed;
    border-collapse: collapse;
}

.preview th {
    width: 216px;
    height: 52px;
    padding: 0 0 7px 14px;
    border: 2px solid #e0e0e0;
    background: #fafafa;
    font-weight: 400;
    text-align: left;
    white-space: nowrap;
}

.preview .picked {
    border-bottom: 4px solid #117865;
    background: #e6e6e6;
    font-weight: 600;
}

.empty {
    padding-top: 50px;
    display: flex;
    flex-direction: column;
    align-items: center;
}

.empty svg {
    width: 106px;
    height: 104px;
    color: #bdbdbd;
}

.empty p {
    margin-top: 4px;
    line-height: 36px;
}

.preview i {
    position: absolute;
    left: 6px;
    bottom: 4px;
    height: 10px;
    border-radius: 5px;
    background: #767676;
}

.marked.options {
    width: 1469px;
    height: 305px;
    margin-top: 36px;
    margin-left: -16px;
    padding: 18px 12px 0 11px;
    display: grid;
    grid-template-columns: 1fr 1fr;
    gap: 37px;
}

.options .select {
    margin-top: 14px;
}

.marked .check {
    height: 36px;
    margin-top: 36px;
    padding-left: 3px;
    display: flex;
    align-items: center;
    gap: 27px;
    font-size: 30px;
    font-weight: 400;
}

.check input {
    appearance: none;
    position: relative;
    flex: none;
    width: 36px;
    height: 36px;
    border: 2px solid #d1d1d1;
    border-radius: 4px;
}

.check input:checked {
    border-color: #117865;
    background: #117865;
}

.check input:checked::after {
    content: "";
    position: absolute;
    left: 11px;
    top: 4px;
    width: 10px;
    height: 18px;
    border: solid #fff;
    border-width: 0 4px 4px 0;
    rotate: 42deg;
}

.check.disabled {
    color: #c7c7c7;
}

.check.disabled input {
    border-color: #e0e0e0;
}

.check-row {
    display: flex;
    align-items: flex-end;
    line-height: 32px;
}

.check-row a {
    margin: 0 18px 0 11px;
    color: #117865;
    text-decoration: underline;
}

.info {
    min-height: 146px;
    margin-top: 6px;
    padding: 18px 50px 0 31px;
    display: flex;
    gap: 18px;
    border-bottom: 2px solid #c8c8c8;
    background: #f5f5f5;
    line-height: 36px;
}

.info p {
    margin-top: 1px;
}

.actions {
    margin-top: 50px;
    display: flex;
    justify-content: flex-end;
    align-items: center;
    gap: 7px;
    font-size: 29px;
    font-weight: 600;
}

.marked.save-mark {
    width: 167px;
    height: 95px;
    margin: 0;
    padding: 6px 7px 8px 8px;
}

.save {
    width: 100%;
    height: 100%;
    border-radius: 8px;
    background: #117865;
    color: #fff;
}

.cancel {
    width: 169px;
    height: 72px;
    border: 2px solid #d1d1d1;
    border-radius: 8px;
}
</style>
